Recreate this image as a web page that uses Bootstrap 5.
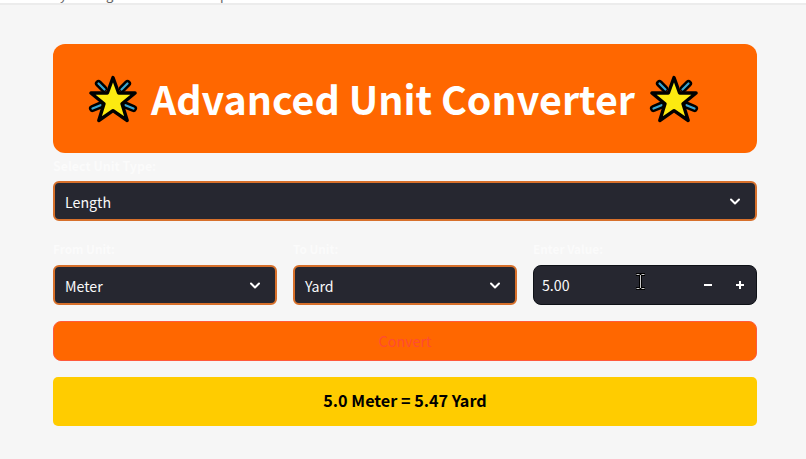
<!DOCTYPE html>
<html lang="en">
<head>
<meta charset="utf-8">
<meta name="viewport" content="width=device-width, initial-scale=1">
<title>Advanced Unit Converter</title>
<link href="https://cdn.jsdelivr.net/npm/bootstrap@5.3.0/dist/css/bootstrap.min.css" rel="stylesheet">
<style>
body{background:#f6f6f6;font-family:"Noto Sans CJK SC","Open Sans",sans-serif;font-size:14.2px;line-height:24px;height:459px;overflow:hidden}
.topstrip{height:5px;background:#fff;border-bottom:2px solid #ececec;padding-left:60px;color:#666;font-size:13px;line-height:12px}
.topstrip span{display:block;margin-top:-11px;height:12px}
.topstrip .s1{width:46px}.topstrip .s2{width:114px}
.page{padding:39px 49px 0 53px}
.hero{height:109px;background:#ff6700;border-radius:12px;padding-left:35px}
.hero h1{font-size:39.4px;line-height:48px;font-weight:700;white-space:nowrap;margin:-2px 13.500px 0 13px}
.cap{font-size:12.4px;line-height:20px;height:28px;padding-top:3px;color:#fbfbfb;font-weight:700}
.grid3 .cap{font-size:11.800px;padding-top:2px}
.picker{height:40px;background:#262730;border:2px solid #d7702b;border-radius:6px;color:#fafafa;padding:2px 14px 0 10px}
.number{border:1px solid #0e1117;border-radius:8px;padding:0 10px 0 8px}
.number svg+svg{margin-left:20px}
.grid3{margin-top:16px;--bs-gutter-x:16px}
.go{height:40px;margin-top:16px;background:#ff6700;border:1px solid #ff5a3c;border-radius:8px;color:#ff4b32;font-size:14.3px;padding:0}
.go:hover{background:#ff6700;color:#ff4b32;border-color:#ff5a3c}
.answer{height:49px;margin-top:16px;padding-bottom:3px;background:#fc0;border-radius:5px;color:#000;font-size:16.2px;font-weight:700}
.cursor{left:635px;top:273px}
</style>
</head>
<body>
<svg class="d-none">
<symbol id="star" viewBox="0 0 50 50"><g stroke-linecap="round" fill="none"><path d="M10.5 9.5l5 5M39.5 9.5l-5 5M4.500 34.5l8-3.3M45.500 34.5l-8-3.3" stroke="#000" stroke-width="7.200"/><path d="M10.5 9.5l6 6M39.5 9.5l-6 6M4.500 34.5l8-3.3M45.500 34.5l-8-3.3" stroke="#3aa5cf" stroke-width="2.2"/></g><path d="M25 3.500l5.6 15.500h16.500L34 29.7l5.2 16.800L25 36.700l-14.200 9.8 5.2-16.800L2.900 19h16.500z" fill="#fcea10" stroke="#000" stroke-width="3.4" stroke-linejoin="round"/></symbol>
<symbol id="chev" viewBox="0 0 12 12"><path d="M2 3.500l4 4 4-4" fill="none" stroke="#fff" stroke-width="2" stroke-linecap="round" stroke-linejoin="round"/></symbol>
</svg>
<div class="topstrip d-flex overflow-hidden"><span class="s1">y</span><span class="s2">g</span><span>p</span></div>
<main class="page">
<div class="hero d-flex align-items-center text-white"><svg width="50" height="50"><use href="#star"/></svg><h1>Advanced Unit Converter</h1><svg width="50" height="50"><use href="#star"/></svg></div>
<div class="cap">Select Unit Type:</div>
<div class="picker d-flex align-items-center justify-content-between"><span>Length</span><svg width="12" height="12"><use href="#chev"/></svg></div>
<div class="row grid3">
<div class="col-4"><div class="cap">From Unit:</div><div class="picker d-flex align-items-center justify-content-between"><span>Meter</span><svg width="12" height="12"><use href="#chev"/></svg></div></div>
<div class="col-4"><div class="cap">To Unit:</div><div class="picker d-flex align-items-center justify-content-between"><span>Yard</span><svg width="12" height="12"><use href="#chev"/></svg></div></div>
<div class="col-4"><div class="cap">Enter Value:</div><div class="picker number d-flex align-items-center"><span class="me-auto">5.00</span><svg width="12" height="12"><path d="M2 6h8" stroke="#fff" stroke-width="2"/></svg><svg width="12" height="12"><path d="M2 6h8M6 2v8" stroke="#fff" stroke-width="2"/></svg></div></div>
</div>
<button class="btn go w-100">Convert</button>
<div class="answer d-flex align-items-center justify-content-center">5.0 Meter = 5.47 Yard</div>
</main>
<svg class="cursor position-absolute" width="11" height="18"><path d="M1 1.500h9M5.500 1.500v14M1 15.500h9" fill="none" stroke="#000" stroke-width="3"/><path d="M1.500 1.500h3M6.500 1.500h3M5.500 2v13M1.500 15.500h3M6.500 15.500h3" fill="none" stroke="#ccc" stroke-width="1"/></svg>
<script src="https://cdn.jsdelivr.net/npm/bootstrap@5.3.0/dist/js/bootstrap.bundle.min.js"></script>
</body>
</html>
